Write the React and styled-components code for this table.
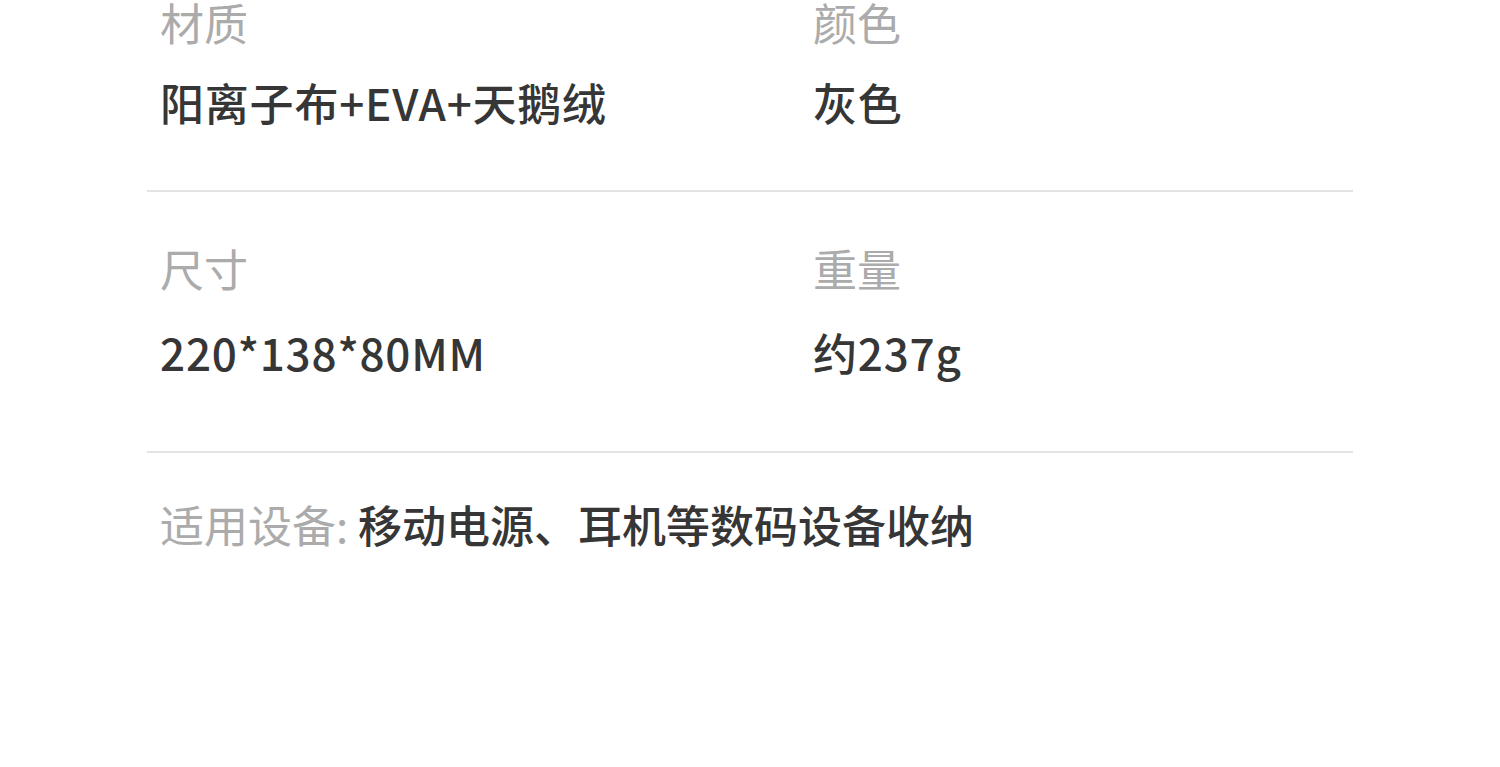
import React from "react"
import styled, { createGlobalStyle } from "styled-components"

const GlobalStyle = createGlobalStyle`
  html, body {
    margin: 0;
    padding: 0;
    background: #ffffff;
  }
  body {
    font-family: "Noto Sans CJK SC", "Noto Sans", sans-serif;
  }
`

const Sheet = styled.section`
  width: 1206px;
  margin-left: 147px;
  height: 767px;
  overflow: hidden;
`

const SpecRow = styled.div`
  display: grid;
  grid-template-columns: 653px 1fr;
  padding: ${({ $top }) => $top}px 12px ${({ $bottom }) => $bottom}px 13px;
  border-bottom: 2px solid #e3e3e3;
`

const SpecCell = styled.div`
  display: flex;
  flex-direction: column;
  gap: ${({ $gap }) => $gap}px;
`

const Label = styled.span`
  font-size: 44px;
  line-height: 44px;
  color: #ababab;
`

const Value = styled.span`
  font-size: 44px;
  line-height: 44px;
  font-weight: 500;
  letter-spacing: 0.8px;
  color: #363636;
`

const UsageLine = styled.p`
  margin: 0;
  padding: 49px 13px 0;
  font-size: 44px;
  line-height: 44px;
  color: #ababab;

  strong {
    font-weight: 500;
    color: #363636;
  }
`

const rows = [
  {
    top: 0,
    bottom: 66,
    gap: 36,
    items: [
      ["材质", "阳离子布+EVA+天鹅绒"],
      ["颜色", "灰色"],
    ],
  },
  {
    top: 54,
    bottom: 77,
    gap: 40,
    items: [
      ["尺寸", "220*138*80MM"],
      ["重量", "约237g"],
    ],
  },
]

export default function App() {
  return (
    <>
      <GlobalStyle />
      <Sheet>
        {rows.map((row, i) => (
          <SpecRow key={i} $top={row.top} $bottom={row.bottom}>
            {row.items.map(([label, value]) => (
              <SpecCell key={label} $gap={row.gap}>
                <Label>{label}</Label>
                <Value>{value}</Value>
              </SpecCell>
            ))}
          </SpecRow>
        ))}
        <UsageLine>
          适用设备: <strong>移动电源、耳机等数码设备收纳</strong>
        </UsageLine>
      </Sheet>
    </>
  )
}
